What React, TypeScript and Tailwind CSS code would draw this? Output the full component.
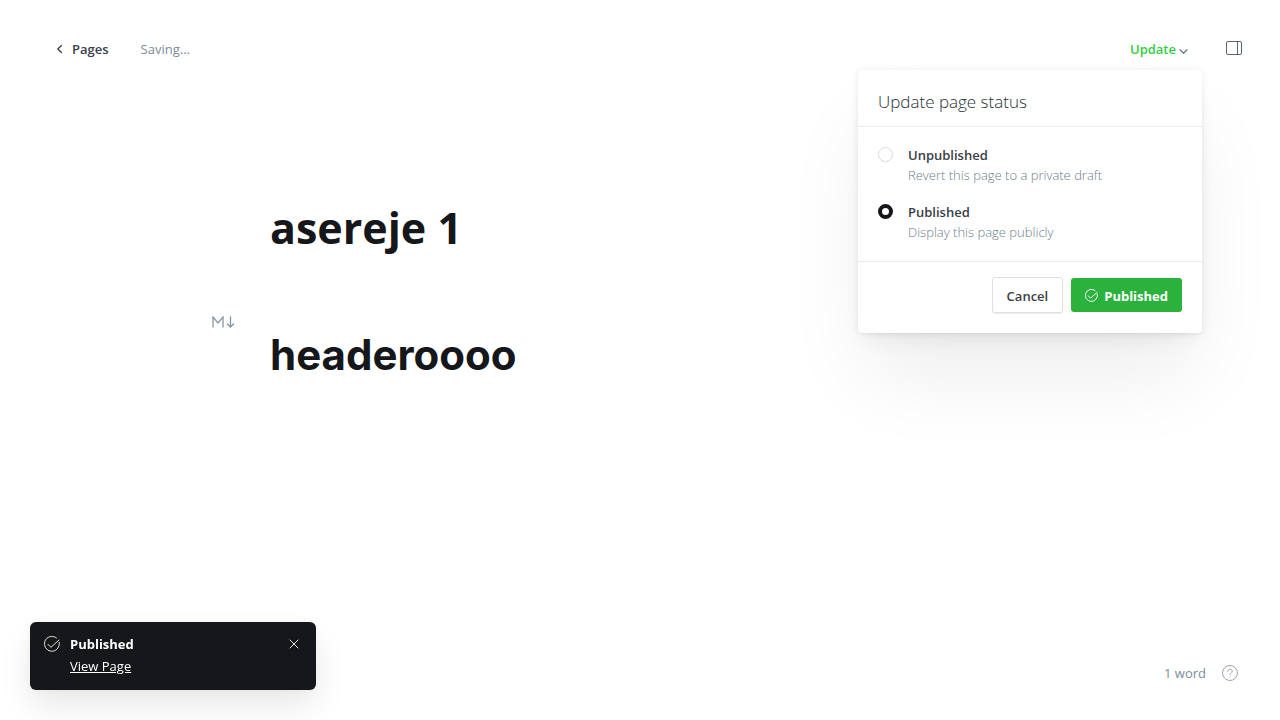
import { useState } from "react";

type Status = "unpublished" | "published";

const OPTIONS: { value: Status; title: string; hint: string }[] = [
  { value: "unpublished", title: "Unpublished", hint: "Revert this page to a private draft" },
  { value: "published", title: "Published", hint: "Display this page publicly" },
];

function CheckCircle({ className }: { className: string }) {
  return (
    <svg viewBox="0 0 24 24" fill="none" stroke="currentColor" strokeLinecap="round" strokeLinejoin="round" className={className} aria-hidden="true">
      <path d="M6 12.5 10.3 17 22.5 6" />
      <path d="M22.8 9.5A11.2 11.2 0 1 1 18.6 2.8" />
    </svg>
  );
}

function StatusMenu() {
  const [status, setStatus] = useState<Status>("published");
  return (
    <section className="absolute right-0 top-full z-10 w-86 rounded bg-white shadow-[0_0_7px_rgba(0,0,0,0.08),0_2px_2px_rgba(0,0,0,0.02),0_13px_20px_-8px_rgba(0,0,0,0.07),0_50px_80px_-8px_rgba(0,0,0,0.07)]">
      <h2 className="px-5 pt-5 pb-3 text-[17px] leading-6 font-light text-[#2a3036]">Update page status</h2>
      <div className="flex flex-col gap-4 border-y border-[#e9ebed] px-5 pt-[18px] pb-[18px]">
        {OPTIONS.map((option) => (
          <label key={option.value} className="flex cursor-pointer gap-[15px]">
            <input
              type="radio"
              name="status"
              checked={status === option.value}
              onChange={() => setStatus(option.value)}
              className="mt-0.5 size-[15px] shrink-0 appearance-none rounded-full border border-[#d2dae0] bg-white checked:border-4 checked:border-[#15171a]"
            />
            <span className="flex flex-col">
              <span className="text-[13px] leading-5 font-semibold text-[#394047]">{option.title}</span>
              <span className="text-[13px] leading-[21px] font-light text-[#6d7c8b]">{option.hint}</span>
            </span>
          </label>
        ))}
      </div>
      <div className="flex items-center justify-end gap-2 px-5 pt-[15px] pb-5">
        <button type="button" className="h-9 rounded-[3px] border border-[#dde1e5] bg-white px-3.5 pt-[3px] text-[13px] font-semibold text-[#394047] shadow-[0_1px_1px_rgba(0,0,0,0.08)]">
          Cancel
        </button>
        <button type="button" className="flex h-[34px] items-center gap-1.5 rounded-[3px] bg-[#2bb23c] px-3.5 pt-[3px] text-[13px] font-bold text-white">
          <CheckCircle className="mb-0.5 size-[13px] stroke-[1.8]" />
          Published
        </button>
      </div>
    </section>
  );
}

function Toast() {
  return (
    <aside className="fixed bottom-[30px] left-[30px] flex w-[286px] items-start gap-2.5 rounded-md bg-[#15171a] px-3.5 pt-[11px] pb-[13px] text-[13px] text-white shadow-[0_0_7px_rgba(0,0,0,0.05),0_16px_32px_rgba(0,0,0,0.09)]">
      <CheckCircle className="mt-[3px] size-4 stroke-[1.3]" />
      <div className="flex grow flex-col">
        <strong className="leading-[22px] font-bold">Published</strong>
        <a href="#page" className="self-start leading-[22px] underline">View Page</a>
      </div>
      <button type="button" aria-label="Close" className="px-[3px] py-1.5">
        <svg viewBox="0 0 10 10" fill="none" stroke="currentColor" strokeWidth=".9" strokeLinecap="round" className="size-2.5">
          <path d="m1 1 8 8M9 1 1 9" />
        </svg>
      </button>
    </aside>
  );
}

export default function App() {
  return (
    <div className="flex min-h-screen flex-col bg-white font-['Open_Sans','Noto_Sans',sans-serif] text-[#15171a]">
      <header className="flex items-center justify-between pt-[29px] pr-[30px] pl-14">
        <div className="flex items-center gap-8 text-[13px]">
          <a href="#pages" className="flex items-center gap-2 font-semibold text-[#394047]">
            <svg viewBox="0 0 8 10" fill="none" stroke="currentColor" strokeWidth="1.3" strokeLinecap="round" strokeLinejoin="round" className="mb-0.5 h-2.5 w-2">
              <path d="M5.500 1.500 1.800 5l3.700 3.500" />
            </svg>
            Pages
          </a>
          <span className="text-[#7c8b9a]">Saving...</span>
        </div>
        <div className="flex items-center gap-4">
          <div className="relative">
            <button type="button" className="flex h-[41px] items-center gap-[3px] px-3.5 text-[13px] font-semibold text-[#30cf43]">
              Update
              <svg viewBox="0 0 9 9" fill="none" stroke="#6b7884" strokeWidth="1.3" strokeLinecap="round" strokeLinejoin="round" className="mt-1 size-[9px]">
                <path d="m1 2.800 3.500 3.500L8 2.800" />
              </svg>
            </button>
            <StatusMenu />
          </div>
          <button type="button" aria-label="Settings" className="px-2 pt-1.5 pb-2.5">
            <svg viewBox="0 0 16 14" fill="none" stroke="#5b6570" className="h-3.5 w-4">
              <rect x=".5" y=".5" width="15" height="13" rx="1.5" />
              <path d="M11.500.5v13" />
            </svg>
          </button>
        </div>
      </header>

      <main className="mx-auto w-full max-w-[740px] grow pt-[130px]">
        <h1 className="text-[43px] leading-[56px] font-bold">asereje 1</h1>
        <div className="relative mt-[70px] pt-px">
          <svg viewBox="0 0 23 12" fill="none" stroke="#8696a7" strokeWidth="1.3" className="absolute -top-2.5 -left-[58px] h-3 w-[23px]" aria-label="Markdown">
            <path d="M1 11.500V1l5 6 5-6v10.500M18.500.5v10.500M15 7.500l3.500 3.500L22 7.500" />
          </svg>
          <h2 className="font-['Inter',sans-serif] text-[42px] leading-[56px] font-bold">headeroooo</h2>
        </div>
      </main>

      <footer className="flex items-center justify-end gap-4 pr-[42px] pb-[37px] text-[13px] text-[#7c8b9a]">
        <span>1 word</span>
        <button type="button" aria-label="Help">
          <svg viewBox="0 0 16 16" fill="none" stroke="#98a4b1" strokeLinecap="round" strokeLinejoin="round" className="size-4">
            <circle cx="8" cy="8" r="7.500" />
            <path d="M5.800 6.300a2.200 2.200 0 1 1 3.200 2c-.7.300-1 .6-1 1.200v.3" />
            <path d="M8 12v.1" />
          </svg>
        </button>
      </footer>
      <Toast />
    </div>
  );
}
